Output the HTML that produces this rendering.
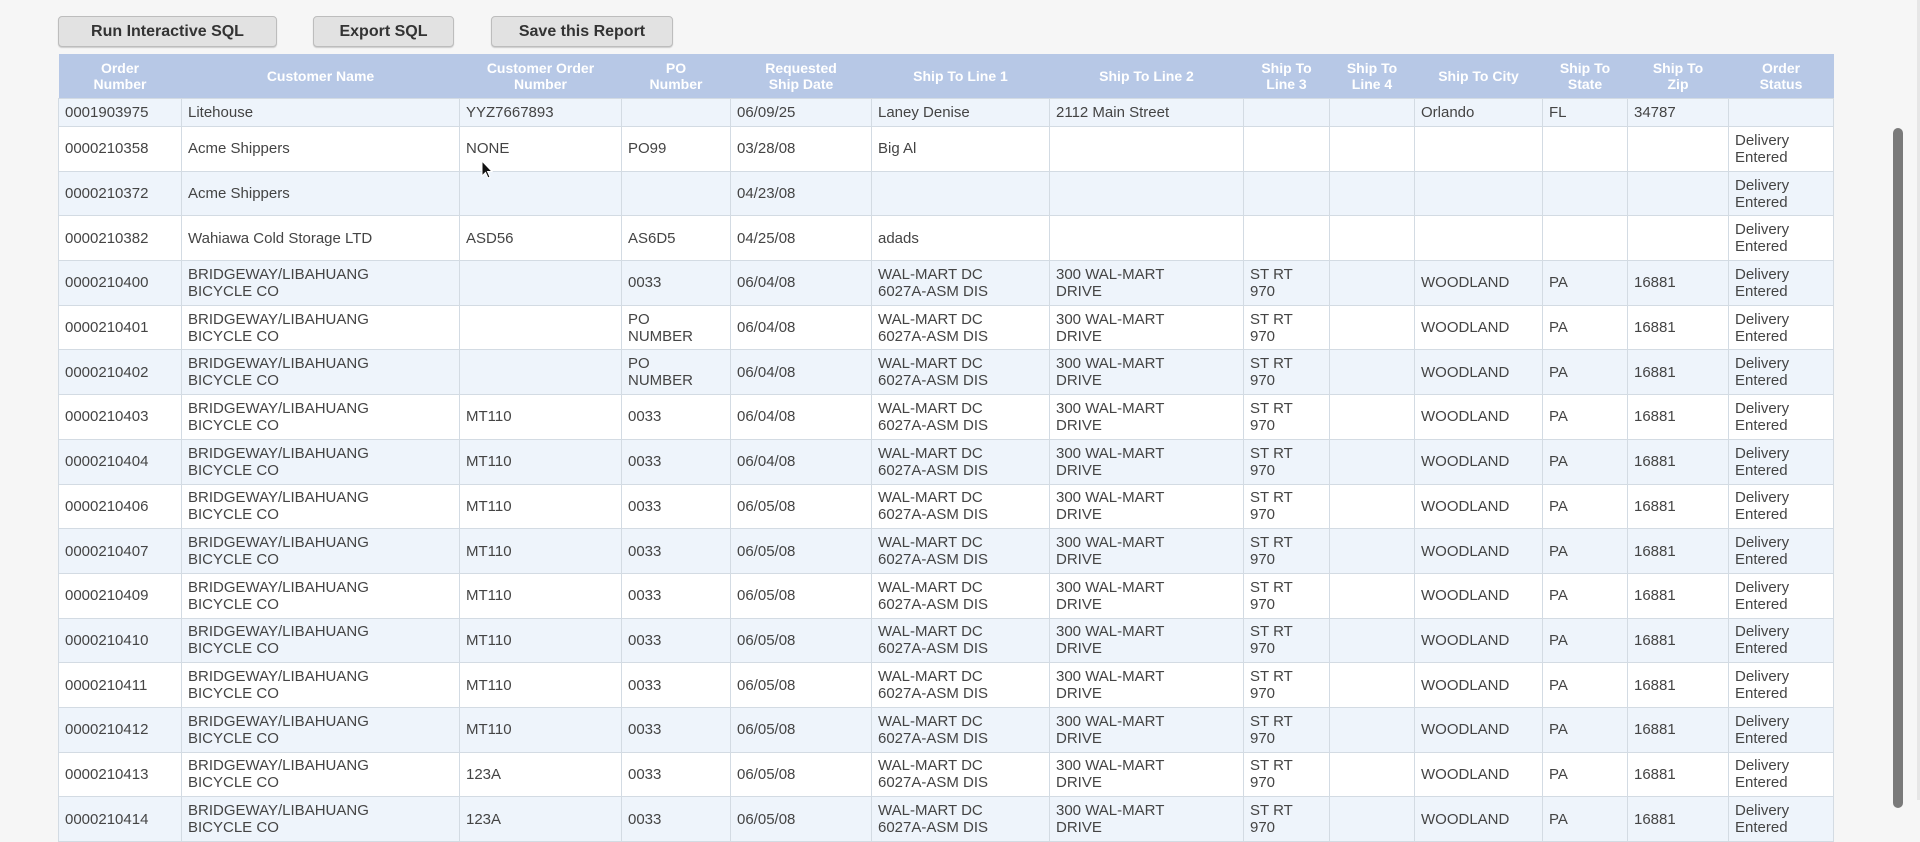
<!DOCTYPE html>
<html><head><meta charset="utf-8"><style>
body{margin:0;width:1920px;height:800px;overflow:hidden;background:#f6f6f6;font-family:"Liberation Sans",Arial,sans-serif;position:relative}
.btn{position:absolute;top:16px;height:31px;background:#e2e2e2;border:1px solid #bdbdbd;border-radius:4px;box-sizing:border-box;font-weight:bold;font-size:16px;color:#333;line-height:29px;text-align:center;box-shadow:0 1px 1px #ccc}
table{position:absolute;left:58px;top:54px;border-collapse:collapse;table-layout:fixed;width:1775px}
th{background:#b7c8e6;color:#fff;font-weight:bold;font-size:14px;line-height:16px;height:44px;padding:0 2px;text-align:center;border:none}
td{border:1px solid #d3dbe3;font-size:15px;line-height:17px;color:#444;padding:0 6px;height:43.7px;vertical-align:middle;overflow:hidden;white-space:nowrap}
tr.f td{height:27px}
tr:nth-child(odd) td{background:#fff}
tr:nth-child(even) td{background:#eef4fb}
.sb{position:absolute;left:1893px;top:128px;width:10px;height:680px;background:#7a7a7a;border-radius:5px}
.rl{position:absolute;left:1917px;top:0;width:3px;height:800px;background:#e6e6e6}
</style></head><body>
<div class="btn" style="left:58px;width:219px">Run Interactive SQL</div>
<div class="btn" style="left:313px;width:141px">Export SQL</div>
<div class="btn" style="left:491px;width:182px">Save this Report</div>
<table>
<colgroup><col style="width:123px"><col style="width:278px"><col style="width:162px"><col style="width:109px"><col style="width:141px"><col style="width:178px"><col style="width:194px"><col style="width:86px"><col style="width:85px"><col style="width:128px"><col style="width:85px"><col style="width:101px"><col style="width:105px"></colgroup>
<tr><th>Order<br>Number</th><th>Customer Name</th><th>Customer Order<br>Number</th><th>PO<br>Number</th><th>Requested<br>Ship Date</th><th>Ship To Line 1</th><th>Ship To Line 2</th><th>Ship To<br>Line 3</th><th>Ship To<br>Line 4</th><th>Ship To City</th><th>Ship To<br>State</th><th>Ship To<br>Zip</th><th>Order<br>Status</th></tr>
<tr class="f"><td>0001903975</td><td>Litehouse</td><td>YYZ7667893</td><td></td><td>06/09/25</td><td>Laney Denise</td><td>2112 Main Street</td><td></td><td></td><td>Orlando</td><td>FL</td><td>34787</td><td></td></tr>
<tr><td>0000210358</td><td>Acme Shippers</td><td>NONE</td><td>PO99</td><td>03/28/08</td><td>Big Al</td><td></td><td></td><td></td><td></td><td></td><td></td><td>Delivery<br>Entered</td></tr>
<tr><td>0000210372</td><td>Acme Shippers</td><td></td><td></td><td>04/23/08</td><td></td><td></td><td></td><td></td><td></td><td></td><td></td><td>Delivery<br>Entered</td></tr>
<tr><td>0000210382</td><td>Wahiawa Cold Storage LTD</td><td>ASD56</td><td>AS6D5</td><td>04/25/08</td><td>adads</td><td></td><td></td><td></td><td></td><td></td><td></td><td>Delivery<br>Entered</td></tr>
<tr><td>0000210400</td><td>BRIDGEWAY/LIBAHUANG<br>BICYCLE CO</td><td></td><td>0033</td><td>06/04/08</td><td>WAL-MART DC<br>6027A-ASM DIS</td><td>300 WAL-MART<br>DRIVE</td><td>ST RT<br>970</td><td></td><td>WOODLAND</td><td>PA</td><td>16881</td><td>Delivery<br>Entered</td></tr>
<tr><td>0000210401</td><td>BRIDGEWAY/LIBAHUANG<br>BICYCLE CO</td><td></td><td>PO<br>NUMBER</td><td>06/04/08</td><td>WAL-MART DC<br>6027A-ASM DIS</td><td>300 WAL-MART<br>DRIVE</td><td>ST RT<br>970</td><td></td><td>WOODLAND</td><td>PA</td><td>16881</td><td>Delivery<br>Entered</td></tr>
<tr><td>0000210402</td><td>BRIDGEWAY/LIBAHUANG<br>BICYCLE CO</td><td></td><td>PO<br>NUMBER</td><td>06/04/08</td><td>WAL-MART DC<br>6027A-ASM DIS</td><td>300 WAL-MART<br>DRIVE</td><td>ST RT<br>970</td><td></td><td>WOODLAND</td><td>PA</td><td>16881</td><td>Delivery<br>Entered</td></tr>
<tr><td>0000210403</td><td>BRIDGEWAY/LIBAHUANG<br>BICYCLE CO</td><td>MT110</td><td>0033</td><td>06/04/08</td><td>WAL-MART DC<br>6027A-ASM DIS</td><td>300 WAL-MART<br>DRIVE</td><td>ST RT<br>970</td><td></td><td>WOODLAND</td><td>PA</td><td>16881</td><td>Delivery<br>Entered</td></tr>
<tr><td>0000210404</td><td>BRIDGEWAY/LIBAHUANG<br>BICYCLE CO</td><td>MT110</td><td>0033</td><td>06/04/08</td><td>WAL-MART DC<br>6027A-ASM DIS</td><td>300 WAL-MART<br>DRIVE</td><td>ST RT<br>970</td><td></td><td>WOODLAND</td><td>PA</td><td>16881</td><td>Delivery<br>Entered</td></tr>
<tr><td>0000210406</td><td>BRIDGEWAY/LIBAHUANG<br>BICYCLE CO</td><td>MT110</td><td>0033</td><td>06/05/08</td><td>WAL-MART DC<br>6027A-ASM DIS</td><td>300 WAL-MART<br>DRIVE</td><td>ST RT<br>970</td><td></td><td>WOODLAND</td><td>PA</td><td>16881</td><td>Delivery<br>Entered</td></tr>
<tr><td>0000210407</td><td>BRIDGEWAY/LIBAHUANG<br>BICYCLE CO</td><td>MT110</td><td>0033</td><td>06/05/08</td><td>WAL-MART DC<br>6027A-ASM DIS</td><td>300 WAL-MART<br>DRIVE</td><td>ST RT<br>970</td><td></td><td>WOODLAND</td><td>PA</td><td>16881</td><td>Delivery<br>Entered</td></tr>
<tr><td>0000210409</td><td>BRIDGEWAY/LIBAHUANG<br>BICYCLE CO</td><td>MT110</td><td>0033</td><td>06/05/08</td><td>WAL-MART DC<br>6027A-ASM DIS</td><td>300 WAL-MART<br>DRIVE</td><td>ST RT<br>970</td><td></td><td>WOODLAND</td><td>PA</td><td>16881</td><td>Delivery<br>Entered</td></tr>
<tr><td>0000210410</td><td>BRIDGEWAY/LIBAHUANG<br>BICYCLE CO</td><td>MT110</td><td>0033</td><td>06/05/08</td><td>WAL-MART DC<br>6027A-ASM DIS</td><td>300 WAL-MART<br>DRIVE</td><td>ST RT<br>970</td><td></td><td>WOODLAND</td><td>PA</td><td>16881</td><td>Delivery<br>Entered</td></tr>
<tr><td>0000210411</td><td>BRIDGEWAY/LIBAHUANG<br>BICYCLE CO</td><td>MT110</td><td>0033</td><td>06/05/08</td><td>WAL-MART DC<br>6027A-ASM DIS</td><td>300 WAL-MART<br>DRIVE</td><td>ST RT<br>970</td><td></td><td>WOODLAND</td><td>PA</td><td>16881</td><td>Delivery<br>Entered</td></tr>
<tr><td>0000210412</td><td>BRIDGEWAY/LIBAHUANG<br>BICYCLE CO</td><td>MT110</td><td>0033</td><td>06/05/08</td><td>WAL-MART DC<br>6027A-ASM DIS</td><td>300 WAL-MART<br>DRIVE</td><td>ST RT<br>970</td><td></td><td>WOODLAND</td><td>PA</td><td>16881</td><td>Delivery<br>Entered</td></tr>
<tr><td>0000210413</td><td>BRIDGEWAY/LIBAHUANG<br>BICYCLE CO</td><td>123A</td><td>0033</td><td>06/05/08</td><td>WAL-MART DC<br>6027A-ASM DIS</td><td>300 WAL-MART<br>DRIVE</td><td>ST RT<br>970</td><td></td><td>WOODLAND</td><td>PA</td><td>16881</td><td>Delivery<br>Entered</td></tr>
<tr><td>0000210414</td><td>BRIDGEWAY/LIBAHUANG<br>BICYCLE CO</td><td>123A</td><td>0033</td><td>06/05/08</td><td>WAL-MART DC<br>6027A-ASM DIS</td><td>300 WAL-MART<br>DRIVE</td><td>ST RT<br>970</td><td></td><td>WOODLAND</td><td>PA</td><td>16881</td><td>Delivery<br>Entered</td></tr>
</table>
<svg style="position:absolute;left:481px;top:160px" width="14" height="20" viewBox="0 0 14 20"><path d="M1 1 L1 16 L4.5 12.5 L7 18 L9 17 L6.5 11.5 L11 11.5 Z" fill="#111" stroke="#fff" stroke-width="1"/></svg>
<div class="sb"></div>
<div class="rl"></div>
</body></html>
